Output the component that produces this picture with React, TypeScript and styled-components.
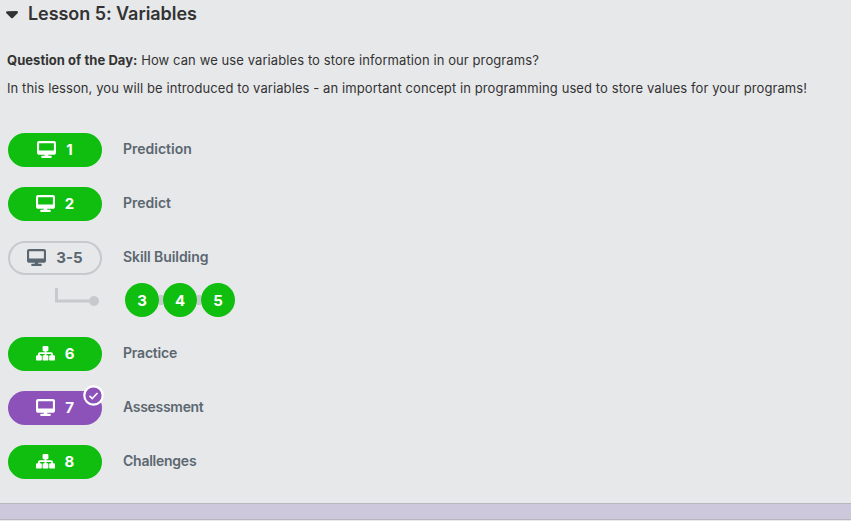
import React from "react";
import styled, { createGlobalStyle } from "styled-components";
import { FaCaretDown, FaDesktop } from "react-icons/fa6";

const GREEN = "#0fbe0f";
const PURPLE = "#8d52ba";
const SLATE = "#5b6770";
const LINE = "#c6cacd";

const GlobalStyle = createGlobalStyle`
  * { box-sizing: border-box; }
  body {
    margin: 0;
    background: #e7e8ea;
    color: #333;
    font-family: Inter, "Liberation Sans", sans-serif;
  }
`;

const Page = styled.main`
  height: 521px;
  display: flex;
  flex-direction: column;
  overflow: hidden;
`;

const Header = styled.header`
  display: flex;
  align-items: center;
  height: 28px;
  padding-left: 6px;
`;

const Caret = styled(FaCaretDown)`
  width: 12px;
  height: 19px;
  margin: 0 10px 2px 0;
  flex: none;
`;

const Title = styled.h2`
  margin: 0;
  font-size: 18px;
  line-height: 28px;
  font-weight: 600;
  letter-spacing: -0.06px;
  white-space: nowrap;
`;

const Description = styled.section`
  padding: 22px 0 0 7px;
`;

const Paragraph = styled.p`
  margin: 0 0 7px;
  font-size: 13px;
  line-height: 21px;
  letter-spacing: 0.09px;
  white-space: nowrap;
`;

const Question = styled.strong`
  font-weight: 700;
  letter-spacing: 0.05px;
`;

const Levels = styled.section`
  display: grid;
  gap: 20px;
  padding: 27px 0 0 8px;
`;

const Row = styled.div`
  display: flex;
  align-items: center;
  height: 34px;
`;

const Pill = styled.a<{ $tone: "done" | "assessed" | "group" }>`
  position: relative;
  display: flex;
  align-items: center;
  justify-content: center;
  gap: 10px;
  width: 94px;
  height: 34px;
  margin-right: 21px;
  border-radius: 17px;
  border: 2px solid
    ${(p) => ({ done: GREEN, assessed: PURPLE, group: LINE })[p.$tone]};
  background: ${(p) =>
    ({ done: GREEN, assessed: PURPLE, group: "transparent" })[p.$tone]};
  color: ${(p) => (p.$tone === "group" ? SLATE : "#fff")};
  font-size: 15px;
  font-weight: 700;
  line-height: 20px;

  > svg:first-child {
    width: 19px;
    height: 17px;
    flex: none;
    margin-bottom: 1px;
  }
`;

const Label = styled.span<{ $spacing: number }>`
  color: ${SLATE};
  font-size: 14px;
  font-weight: 600;
  line-height: 20px;
  padding-bottom: 2px;
  letter-spacing: ${(p) => p.$spacing}px;
`;

const Badge = styled.svg`
  position: absolute;
  top: -8px;
  right: -4px;
  width: 21px;
  height: 21px;
`;

const Group = styled.div`
  display: grid;
  gap: 8px;
`;

const Connector = styled.svg`
  width: 94px;
  height: 34px;
  margin-right: 23px;
`;

const Bubble = styled.a`
  display: grid;
  place-items: center;
  width: 34px;
  height: 34px;
  border-radius: 50%;
  background: ${GREEN};
  color: #fff;
  font-size: 15px;
  font-weight: 700;
`;

const Link = styled.span`
  width: 4px;
  height: 10px;
  background: ${LINE};
`;

const NextLesson = styled.footer`
  height: 17px;
  margin: auto 0 1px;
  border-top: 1px solid #b9b7be;
  border-bottom: 1px solid #b9b7be;
  background: #cec8dd;
`;

function Sitemap() {
  return (
    <svg viewBox="0 0 19 17" fill="currentColor">
      <rect x="6.6" y="1" width="5.8" height="5.2" rx="1" />
      <rect x="0" y="10.2" width="5.8" height="5.4" rx="1.2" />
      <rect x="6.6" y="10.2" width="5.8" height="5.4" rx="1.2" />
      <rect x="13.2" y="10.2" width="5.8" height="5.4" rx="1.2" />
      <path
        d="M9.5 5v6M2.9 11V9.2q0-1 1-1h11.2q1 0 1 1V11"
        fill="none"
        stroke="currentColor"
        strokeWidth="1.8"
      />
    </svg>
  );
}

type LevelProps = {
  number: string;
  name: string;
  spacing?: number;
  tone?: "done" | "assessed" | "group";
  unplugged?: boolean;
};

function Level({ number, name, spacing = 0, tone = "done", unplugged }: LevelProps) {
  return (
    <Row>
      <Pill $tone={tone}>
        {unplugged ? <Sitemap /> : <FaDesktop />}
        <span>{number}</span>
        {tone === "assessed" && (
          <Badge viewBox="0 0 21 21">
            <circle cx="10.5" cy="10.5" r="9.2" fill={PURPLE} stroke="#fff" strokeWidth="2.2" />
            <path d="M6.5 10.8l2.7 2.7 5.3-5.5" fill="none" stroke="#fff" strokeWidth="1.6" />
          </Badge>
        )}
      </Pill>
      <Label $spacing={spacing}>{name}</Label>
    </Row>
  );
}

export default function App() {
  return (
    <>
      <GlobalStyle />
      <Page>
        <Header>
          <Caret />
          <Title>Lesson 5: Variables</Title>
        </Header>
        <Description>
          <Paragraph>
            <Question>Question of the Day:</Question> How can we use variables to store
            information in our programs?
          </Paragraph>
          <Paragraph>
            In this lesson, you will be introduced to variables - an important concept in
            programming used to store values for your programs!
          </Paragraph>
        </Description>
        <Levels>
          <Level number="1" name="Prediction" />
          <Level number="2" name="Predict" />
          <Group>
            <Level number="3-5" name="Skill Building" tone="group" spacing={-0.08} />
            <Row>
              <Connector viewBox="0 0 94 34">
                <path d="M48.5 5v13H86" fill="none" stroke={LINE} strokeWidth="3" />
                <circle cx="86" cy="18" r="5" fill={LINE} />
              </Connector>
              <Bubble>3</Bubble>
              <Link />
              <Bubble>4</Bubble>
              <Link />
              <Bubble>5</Bubble>
            </Row>
          </Group>
          <Level number="6" name="Practice" unplugged spacing={-0.2} />
          <Level number="7" name="Assessment" tone="assessed" spacing={-0.3} />
          <Level number="8" name="Challenges" unplugged spacing={-0.25} />
        </Levels>
        <NextLesson />
      </Page>
    </>
  );
}
